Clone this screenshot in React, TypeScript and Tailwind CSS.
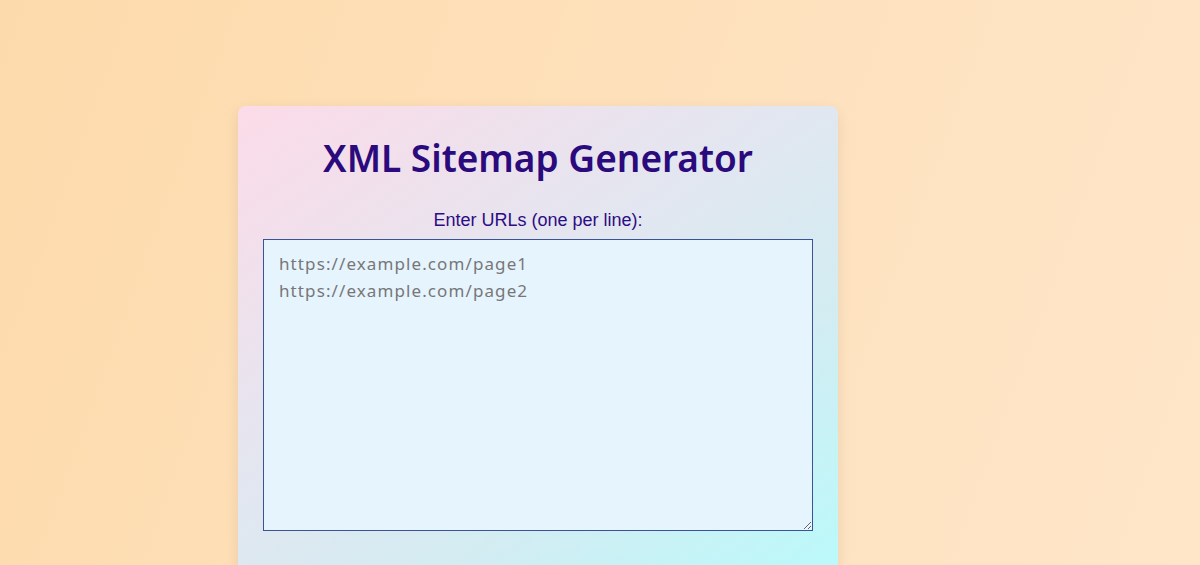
export default function App() {
  return (
    <div className="min-h-screen w-full overflow-hidden bg-[linear-gradient(110deg,#fddaab_0%,#fee2bf_60%,#ffe6c9_100%)] pl-[238px] pt-[106px]">
      <div className="w-[600px] h-[520px] rounded-lg bg-[linear-gradient(145deg,#fcdbe8_0%,#e3e6f0_40%,#d3ecf2_65%,#b6fcfc_100%)] px-[25px] pt-[28px] shadow-[0_4px_14px_rgba(0,0,0,0.08)]">
        <h1 className="text-center font-['Noto_Sans',sans-serif] text-[37px] font-semibold leading-[48px] text-[#2a0a7c]">
          XML Sitemap Generator
        </h1>
        <div className="mt-[27px] flex flex-col items-center">
          <label htmlFor="urls" className="font-['Liberation_Sans',Arial,sans-serif] text-[18px] leading-[22px] text-[#2d0d84]">
            Enter URLs (one per line):
          </label>
          <textarea
            id="urls"
            placeholder={'https://example.com/page1\nhttps://example.com/page2'}
            className="mt-[8px] h-[292px] w-[550px] border border-[#3a5296] bg-[#e6f4fe] px-[15px] py-[10px] font-['Noto_Sans',sans-serif] text-[17px] leading-[27px] tracking-[1.1px] text-[#333] outline-none placeholder:text-[#777]"
          />
        </div>
      </div>
    </div>
  )
}
